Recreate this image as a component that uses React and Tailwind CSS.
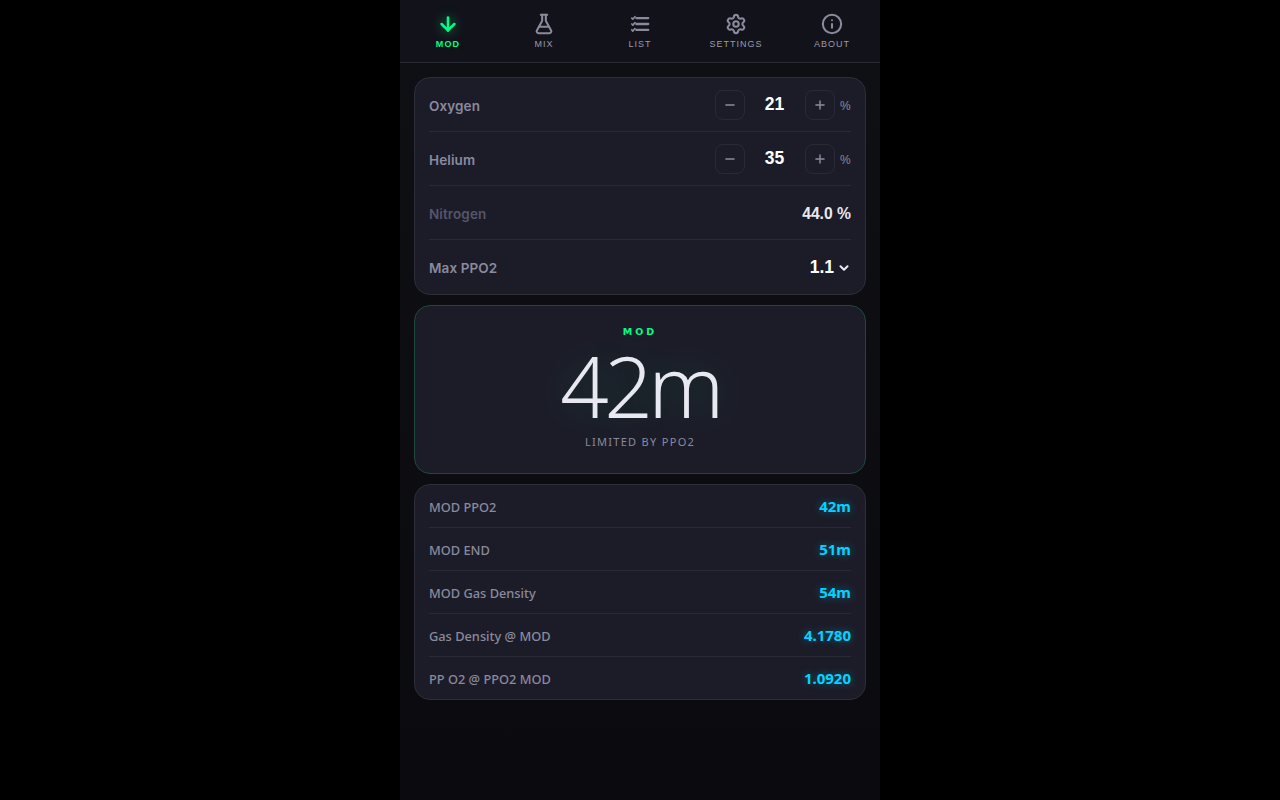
import React from "react";
import { ArrowDown, FlaskConical, Settings, Info, ChevronDown, Minus, Plus } from "lucide-react";

function ListIcon({ size, className }) {
  return (
    <svg width={size} height={size} viewBox="0 0 24 24" fill="none" stroke="currentColor" strokeWidth="2.5" strokeLinecap="round" className={className}>
      <path d="M8 5.5h13M8 12h13M8 18.5h13" />
      <path d="M3 5.5l1.2 1.2L6.5 4M3 12l1.2 1.2L6.5 10.5M3 18.5l1.2 1.2L6.5 17" strokeWidth="1.8" strokeLinejoin="round" />
    </svg>
  );
}

const tabs = [
  { label: "MOD", Icon: ArrowDown, active: true },
  { label: "MIX", Icon: FlaskConical },
  { label: "LIST", Icon: ListIcon },
  { label: "SETTINGS", Icon: Settings },
  { label: "ABOUT", Icon: Info },
];

const results = [
  ["MOD PPO2", "42m"],
  ["MOD END", "51m"],
  ["MOD Gas Density", "54m"],
  ["Gas Density @ MOD", "4.1780"],
  ["PP O2 @ PPO2 MOD", "1.0920"],
];

function Stepper({ label, value }) {
  return (
    <div className="h-[54px] pt-1 flex items-center justify-between border-b border-[#2a2a36]">
      <span className="text-[13.5px] font-semibold tracking-[0.1px] text-[#8a8a9e] font-['Inter',sans-serif]">{label}</span>
      <div className="flex items-center">
        <button className="w-[30px] h-[30px] rounded-lg border border-[#2a2a36] flex items-center justify-center text-[#8a8a9e] mb-1">
          <Minus size={14} strokeWidth={2.5} />
        </button>
        <span className="w-[60px] pr-[1px] text-center text-[17.5px] font-bold text-white font-['Liberation_Sans',sans-serif] mb-1">{value}</span>
        <button className="w-[30px] h-[30px] rounded-lg border border-[#2a2a36] flex items-center justify-center text-[#8a8a9e] mb-1">
          <Plus size={14} strokeWidth={2.5} />
        </button>
        <span className="ml-[5px] w-[11px] text-[12px] text-[#8a8a9e] font-['Liberation_Sans',sans-serif] mb-[2px]">%</span>
      </div>
    </div>
  );
}

export default function App() {
  return (
    <div className="min-h-[800px] bg-black flex justify-center">
      <div className="w-[480px] h-[800px] bg-gradient-to-b from-[#0f1014] to-[#0a0a0f] flex flex-col">
        <nav className="h-[63px] bg-[#12121a] border-b border-[#2a2a32] flex">
          {tabs.map(({ label, Icon, active }) => (
            <div key={label} className="flex-1 flex flex-col items-center pt-[13px]">
              <Icon
                size={22}
                strokeWidth={active ? 2.75 : 2.25}
                className={active ? "text-[#00ff88] drop-shadow-[0_0_6px_rgba(0,255,136,0.6)]" : "text-[#8a8a9e]"}
              />
              <span
                className={`mt-[4px] leading-[11px] text-[9px] font-['Liberation_Sans',sans-serif] ${active ? "tracking-[1.1px] text-[#00ff88] font-bold" : "tracking-[1px] text-[#9a9aae] font-normal"}`}
              >
                {label}
              </span>
            </div>
          ))}
        </nav>

        <main className="px-[14px] pt-[14px] flex flex-col gap-[10px]">
          <section className="h-[218px] rounded-2xl bg-[#1c1c28] border border-[#2e2e3a] px-[14px]">
            <Stepper label="Oxygen" value="21" />
            <Stepper label="Helium" value="35" />
            <div className="h-[54px] pt-1 flex items-center justify-between border-b border-[#2a2a36]">
              <span className="text-[13.5px] font-semibold tracking-[0.1px] text-[#55556a] font-['Inter',sans-serif]">Nitrogen</span>
              <span className="text-[15.7px] font-bold text-[#e8e8f0] font-['Liberation_Sans',sans-serif] mb-px">44.0 %</span>
            </div>
            <div className="h-[54px] pt-[3px] flex items-center justify-between">
              <span className="text-[13.5px] font-semibold tracking-[0.1px] text-[#8a8a9e] font-['Inter',sans-serif]">Max PPO2</span>
              <span className="flex items-center gap-[3px] text-[17.5px] font-bold text-white font-['Liberation_Sans',sans-serif] mb-0.5">
                1.1
                <ChevronDown size={14} strokeWidth={3.5} className="text-[#e8e8f0]" />
              </span>
            </div>
          </section>

          <section className="h-[169px] rounded-2xl bg-[#1c1c28] border border-[#1d4a3c] flex flex-col items-center pt-[20px]">
            <span className="text-[9.5px] font-bold tracking-[3px] text-[#00ff88] font-['DejaVu_Sans',sans-serif] leading-[12px]">MOD</span>
            <span className="text-[85px] font-light tracking-[-4.5px] leading-[96px] -mt-[1px] text-[#e8e8f0] font-['Noto_Sans',sans-serif] [text-shadow:0_0_40px_rgba(0,255,136,0.2)]">42m</span>
            <span className="mt-[1px] text-[11px] tracking-[1.3px] leading-[15px] text-[#8a8a9e] font-['Noto_Sans',sans-serif]">LIMITED BY PPO2</span>
          </section>

          <section className="h-[216px] rounded-2xl bg-[#1c1c28] border border-[#2e2e3a] px-[14px]">
            {results.map(([label, value], i) => (
              <div key={label} className={`h-[43px] flex items-center justify-between ${i < 4 ? "border-b border-[#2a2a36]" : ""}`}>
                <span className="text-[12.8px] font-medium text-[#8a8a9e] font-['Noto_Sans',sans-serif] mt-[3px]">{label}</span>
                <span className="text-[15px] font-bold text-[#00d4ff] font-['Noto_Sans',sans-serif] [text-shadow:0_0_8px_rgba(0,212,255,0.4)]">{value}</span>
              </div>
            ))}
          </section>
        </main>
      </div>
    </div>
  );
}
